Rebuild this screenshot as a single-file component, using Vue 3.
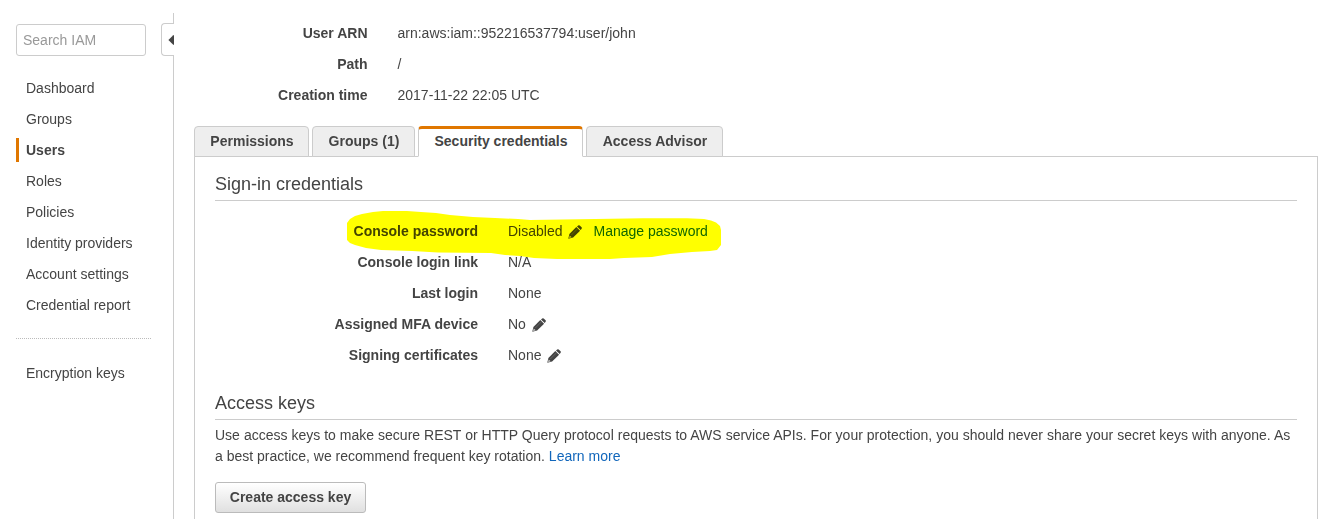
<script setup>
const navItems = ['Dashboard', 'Groups', 'Users', 'Roles', 'Policies', 'Identity providers', 'Account settings', 'Credential report']
const activeNav = 'Users'

const summary = [
  { label: 'User ARN', value: 'arn:aws:iam::952216537794:user/john' },
  { label: 'Path', value: '/' },
  { label: 'Creation time', value: '2017-11-22 22:05 UTC' },
]

const tabs = ['Permissions', 'Groups (1)', 'Security credentials', 'Access Advisor']
const activeTab = 'Security credentials'

const credentials = [
  { label: 'Console password', value: 'Disabled', editable: true, link: 'Manage password' },
  { label: 'Console login link', value: 'N/A' },
  { label: 'Last login', value: 'None' },
  { label: 'Assigned MFA device', value: 'No', editable: true },
  { label: 'Signing certificates', value: 'None', editable: true },
]
</script>

<template>
  <div class="page">
    <aside class="sidebar">
      <input class="search" type="text" placeholder="Search IAM" />
      <nav class="nav">
        <a v-for="item in navItems" :key="item" class="nav-item" :class="{ active: item === activeNav }">{{ item }}</a>
      </nav>
      <div class="divider"></div>
      <nav class="nav"><a class="nav-item">Encryption keys</a></nav>
    </aside>

    <div class="rail">
      <div class="rail-top"></div>
      <button class="collapse" aria-label="Collapse">
        <svg width="6" height="10" viewBox="0 0 6 10"><path d="M6 0V10L5 9.6L0.4 5L5 0.4Z" fill="#444" /></svg>
      </button>
      <div class="rail-line"></div>
    </div>

    <main class="main">
      <dl class="summary">
        <div v-for="row in summary" :key="row.label" class="row">
          <dt>{{ row.label }}</dt>
          <dd>{{ row.value }}</dd>
        </div>
      </dl>

      <div class="tabs">
        <button v-for="tab in tabs" :key="tab" class="tab" :class="{ active: tab === activeTab }">{{ tab }}</button>
      </div>

      <section class="panel">
        <h2>Sign-in credentials</h2>
        <dl class="credentials">
          <div v-for="row in credentials" :key="row.label" class="row">
            <dt>{{ row.label }}</dt>
            <dd>
              <span>{{ row.value }}</span>
              <svg v-if="row.editable" class="pencil" width="14" height="14" viewBox="0 0 14 14">
                <path d="M8.3 2L12.1 5.7L5.1 12.6L0.3 13.8L1.4 8.9Z" fill="#444" />
                <path d="M9 1.4L10.2 0.4Q11 -0.1 11.7 0.5L13.6 2.3Q14.2 3.1 13.6 3.8L12.7 4.9Z" fill="#444" />
                <path d="M3.3 10L9.3 4" stroke="#858585" stroke-width="0.5" fill="none" />
                <path d="M1.8 10.4L3.7 12.3L1.4 12.9L1.1 12.6Z" fill="#ccc" />
              </svg>
              <a v-if="row.link" class="manage">{{ row.link }}</a>
            </dd>
          </div>
          <svg class="marker" width="376" height="50" viewBox="347 210 376 50">
            <path
              d="M347 223L350 219L355 216L362 214L373 212L383 211H407L421 212L436 213L450 215L473 217L495 218L518 219L530 220L579 219.3L643 218.2H687L704 219L711 220.5L716 222.5L720 226L721 230V245L717 250L710 251L692 252L670 254L652 257L624 258L610 259H557L534 258L520 256L505 255L491 253L438 252.5L412 251L381 250L366 248L355 245L350 243L347 240Z"
              fill="#ff0"
            />
          </svg>
        </dl>

        <h2>Access keys</h2>
        <p>
          <span class="first-line">Use access keys to make secure REST or HTTP Query protocol requests to AWS service APIs. For your protection, you should never share your secret keys with anyone. As</span><br />a best practice, we recommend frequent key rotation. <a class="link">Learn more</a>
        </p>
        <button class="create">Create access key</button>
      </section>
    </main>
  </div>
</template>

<style>
html,
body {
  margin: 0;
  background: #fff;
  overflow: hidden;
}
</style>

<style scoped>
.page {
  display: flex;
  height: 519px;
  overflow: hidden;
  background: #fff;
  color: #444;
  font: 14px/21px "Liberation Sans", Arial, sans-serif;
}
.page * {
  box-sizing: border-box;
}
.sidebar {
  width: 161px;
  padding: 24px 10px 0 16px;
  flex: none;
}
.search {
  display: block;
  width: 130px;
  height: 32px;
  padding: 0 6px;
  border: 1px solid #ccc;
  border-radius: 3px;
  font: inherit;
  background: #fff;
}
.search::placeholder {
  color: #999;
  opacity: 1;
}
.nav {
  display: flex;
  flex-direction: column;
  gap: 7px;
}
.search + .nav {
  margin-top: 20px;
}
.nav-item {
  height: 24px;
  line-height: 24px;
  padding-left: 7px;
  border-left: 3px solid transparent;
  white-space: nowrap;
}
.nav-item.active {
  border-left-color: #e07700;
  font-weight: bold;
}
.divider {
  margin: 21px 0 22px;
  border-top: 1px dotted #bbb;
}
.rail {
  width: 13px;
  flex: none;
  display: flex;
  flex-direction: column;
  align-items: flex-end;
  padding-top: 13px;
}
.rail-top {
  height: 10px;
  border-right: 1px solid #ccc;
}
.collapse {
  width: 13px;
  height: 33px;
  flex: none;
  padding: 0;
  display: flex;
  align-items: center;
  justify-content: flex-end;
  border: 1px solid #ccc;
  border-right: 0;
  border-radius: 4px 0 0 4px;
  background: #fff;
}
.rail-line {
  flex: 1;
  border-right: 1px solid #ccc;
}
.main {
  width: 1124px;
  margin-left: 20px;
  flex: none;
  display: flex;
  flex-direction: column;
}
dl,
dd {
  margin: 0;
}
.row {
  display: flex;
  height: 31px;
  align-items: center;
}
dt {
  flex: none;
  font-weight: bold;
  text-align: right;
}
dd {
  display: flex;
  align-items: center;
  white-space: nowrap;
}
.summary {
  padding-top: 18px;
  height: 126px;
}
.summary dt {
  width: 173.5px;
  margin-right: 30px;
}
.tabs {
  display: flex;
  gap: 3px;
  height: 30px;
}
.tab {
  height: 31px;
  padding: 1px 0 1px 1px;
  border: 1px solid #ccc;
  border-radius: 4px 4px 0 0;
  background: #eee;
  color: #444;
  font: bold 14px/27px "Liberation Sans", Arial, sans-serif;
  white-space: nowrap;
  position: relative;
}
.tab:nth-child(1) { width: 115px; }
.tab:nth-child(2) { width: 103px; }
.tab:nth-child(3) { width: 165px; }
.tab:nth-child(4) { width: 137px; }
.tab.active {
  border-top: 3px solid #e07700;
  border-bottom-color: #fff;
  padding-bottom: 3px;
  background: #fff;
  line-height: 23px;
  z-index: 1;
}
.panel {
  flex: 1;
  padding: 15px 20px 0;
  border: 1px solid #ccc;
  border-bottom: 0;
}
h2 {
  margin: 0;
  height: 29px;
  border-bottom: 1px solid #ccc;
  font-size: 18px;
  line-height: 24px;
  font-weight: normal;
}
.credentials {
  position: relative;
  padding-top: 15px;
  height: 190px;
}
.credentials dt {
  width: 263px;
  margin-right: 30px;
}
.pencil {
  margin: 1px 0 0 6px;
}
.manage {
  margin-left: 11px;
  color: #1166bb;
}
.marker {
  position: absolute;
  left: 132px;
  top: 9px;
  mix-blend-mode: multiply;
  pointer-events: none;
}
p {
  margin: 5px 0 15px;
  white-space: nowrap;
}
.first-line {
  word-spacing: 0.09px;
}
.link {
  color: #1166bb;
}
.create {
  display: block;
  width: 151px;
  height: 31px;
  padding: 1px 0;
  border: 1px solid #bbb;
  border-radius: 3px;
  background: linear-gradient(#fff, #e0e0e0);
  color: #444;
  font: bold 14px/27px "Liberation Sans", Arial, sans-serif;
}
</style>
